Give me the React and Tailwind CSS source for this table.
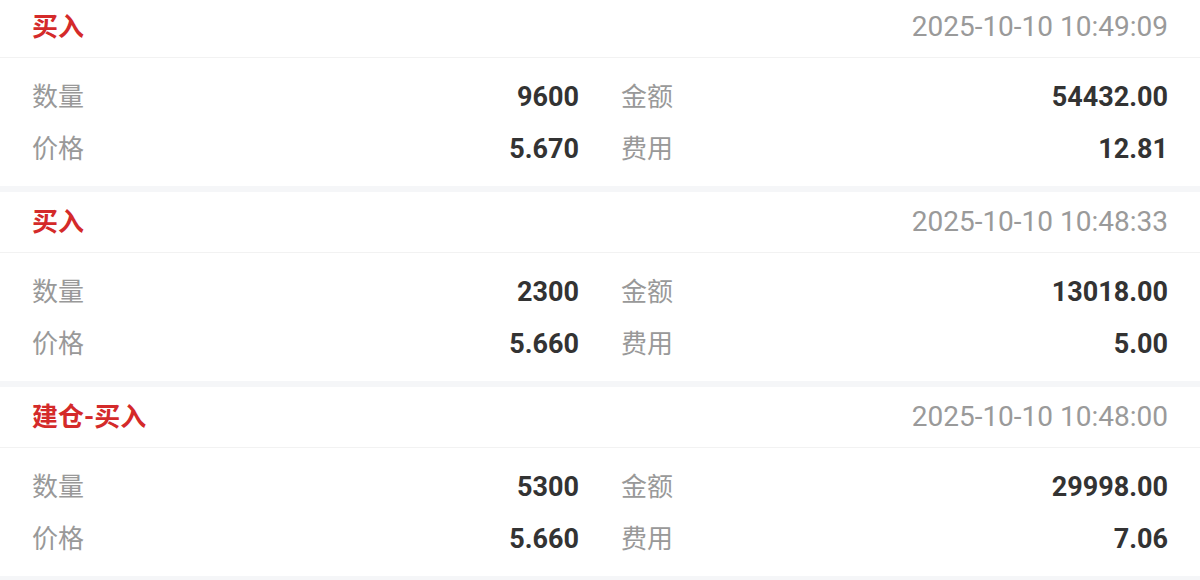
import React from "react";

const trades = [
  { type: "买入", time: "2025-10-10 10:49:09", qty: "9600", amount: "54432.00", price: "5.670", fee: "12.81" },
  { type: "买入", time: "2025-10-10 10:48:33", qty: "2300", amount: "13018.00", price: "5.660", fee: "5.00" },
  { type: "建仓-买入", time: "2025-10-10 10:48:00", qty: "5300", amount: "29998.00", price: "5.660", fee: "7.06" },
];

const cjk = { fontFamily: 'Roboto, "Noto Sans CJK SC", sans-serif' };

function Cell({ label, value }) {
  return (
    <div className="flex h-[52px] items-center justify-between">
      <span className="text-[26px] text-[#999999]" style={cjk}>{label}</span>
      <span className="text-[27px] font-bold text-[#333333]" style={cjk}>{value}</span>
    </div>
  );
}

function Card({ t }) {
  return (
    <div className="bg-white">
      <div className="flex h-[61px] items-center justify-between border-b border-[#f2f2f2] px-8">
        <span className="text-[26px] font-bold text-[#d42a2a]" style={cjk}>{t.type}</span>
        <span className="text-[28px] text-[#9a9a9a]" style={cjk}>{t.time}</span>
      </div>
      <div className="grid grid-cols-2 gap-x-[42px] px-8 pt-[13px] pb-[11px]">
        <Cell label="数量" value={t.qty} />
        <Cell label="金额" value={t.amount} />
        <Cell label="价格" value={t.price} />
        <Cell label="费用" value={t.fee} />
      </div>
    </div>
  );
}

export default function App() {
  return (
    <div className="h-[580px] w-[1200px] overflow-hidden bg-[#f5f6f8]">
      <div className="-mt-[3px] flex flex-col gap-[6px]">
        {trades.map((t, i) => (
          <Card key={i} t={t} />
        ))}
      </div>
    </div>
  );
}
